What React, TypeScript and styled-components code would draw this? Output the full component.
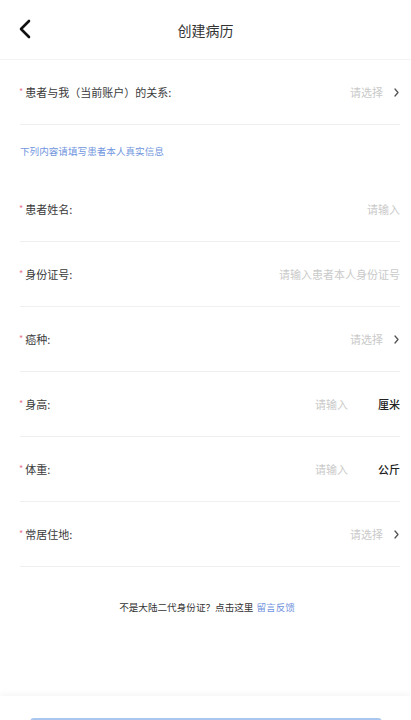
import React from "react";
import styled, { createGlobalStyle } from "styled-components";

const GlobalStyle = createGlobalStyle`
  html, body {
    margin: 0;
    padding: 0;
    background: #fff;
  }
  body {
    font-family: "Noto Sans CJK SC", "Noto Sans", sans-serif;
    color: #333;
  }
`;

const Page = styled.div`
  height: 100vh;
  display: flex;
  flex-direction: column;
  overflow: hidden;
  background: #fff;
`;

const Header = styled.header`
  height: 59px;
  flex-shrink: 0;
  display: flex;
  align-items: center;
  justify-content: center;
  position: relative;
  border-bottom: 1px solid #f3f3f3;
`;

const BackButton = styled.button`
  position: absolute;
  left: 14px;
  top: 17px;
  width: 22px;
  height: 24px;
  padding: 0;
  border: 0;
  background: transparent;
  display: flex;
  align-items: center;
  justify-content: center;
`;

const Title = styled.h1`
  margin: 0;
  font-size: 14px;
  font-weight: 400;
  color: #333;
`;

const Main = styled.main`
  flex: 1;
  padding: 0 11px 0 20px;
`;

const Row = styled.div`
  height: 64px;
  display: flex;
  align-items: center;
  border-bottom: 1px solid #efefef;
`;

const Star = styled.span`
  color: #e8798f;
  font-size: 9px;
  margin-right: 2px;
  margin-left: -1px;
  position: relative;
  top: -1px;
`;

const Label = styled.span`
  font-size: 11px;
  color: #3a3a3a;
  flex: 1;
`;

const Placeholder = styled.span`
  font-size: 11px;
  color: #cacaca;
`;

const Unit = styled.span`
  font-size: 11px;
  color: #222;
  font-weight: 500;
  margin-left: 30px;
`;

const Chevron = styled.svg`
  margin-left: 11px;
  margin-right: 1px;
`;

const Note = styled.div`
  height: 52px;
  display: flex;
  align-items: center;
  font-size: 9.6px;
  color: #7196de;
`;

const Footer = styled.p`
  margin: 33px 0 0;
  text-align: center;
  font-size: 9.6px;
  color: #333;
  padding-right: 6px;
`;

const Link = styled.span`
  color: #6f92dc;
  margin-left: 3px;
`;

const BottomBar = styled.div`
  flex-shrink: 0;
  height: 24px;
  padding-top: 22px;
  box-shadow: 0 -3px 6px rgba(0, 0, 0, 0.035);
  display: flex;
  justify-content: center;
  box-sizing: border-box;
`;

const SubmitButton = styled.button`
  width: 352px;
  height: 44px;
  border: 0;
  border-radius: 4px;
  background: #a9c6ef;
  flex-shrink: 0;
`;

type Field = {
  label: string;
  placeholder: string;
  select?: boolean;
  unit?: string;
};

const topField: Field = { label: "患者与我（当前账户）的关系:", placeholder: "请选择", select: true };

const fields: Field[] = [
  { label: "患者姓名:", placeholder: "请输入" },
  { label: "身份证号:", placeholder: "请输入患者本人身份证号" },
  { label: "癌种:", placeholder: "请选择", select: true },
  { label: "身高:", placeholder: "请输入", unit: "厘米" },
  { label: "体重:", placeholder: "请输入", unit: "公斤" },
  { label: "常居住地:", placeholder: "请选择", select: true },
];

const FormRow = ({ label, placeholder, select, unit }: Field) => (
  <Row>
    <Star>*</Star>
    <Label>{label}</Label>
    <Placeholder>{placeholder}</Placeholder>
    {unit && <Unit>{unit}</Unit>}
    {select && (
      <Chevron width="5" height="9" viewBox="0 0 5 9">
        <path d="M1 1l3 3.5L1 8" fill="none" stroke="#555" strokeWidth="1.3" strokeLinecap="round" strokeLinejoin="round" />
      </Chevron>
    )}
  </Row>
);

export default function App() {
  return (
    <Page>
      <GlobalStyle />
      <Header>
        <BackButton aria-label="返回">
          <svg width="14" height="20" viewBox="0 0 14 20">
            <path d="M11 2L3 10l8 8" fill="none" stroke="#111" strokeWidth="2.6" strokeLinecap="round" strokeLinejoin="round" />
          </svg>
        </BackButton>
        <Title>创建病历</Title>
      </Header>
      <Main>
        <FormRow {...topField} />
        <Note>下列内容请填写患者本人真实信息</Note>
        {fields.map((f) => (
          <FormRow key={f.label} {...f} />
        ))}
        <Footer>
          不是大陆二代身份证？点击这里<Link>留言反馈</Link>
        </Footer>
      </Main>
      <BottomBar>
        <SubmitButton />
      </BottomBar>
    </Page>
  );
}
